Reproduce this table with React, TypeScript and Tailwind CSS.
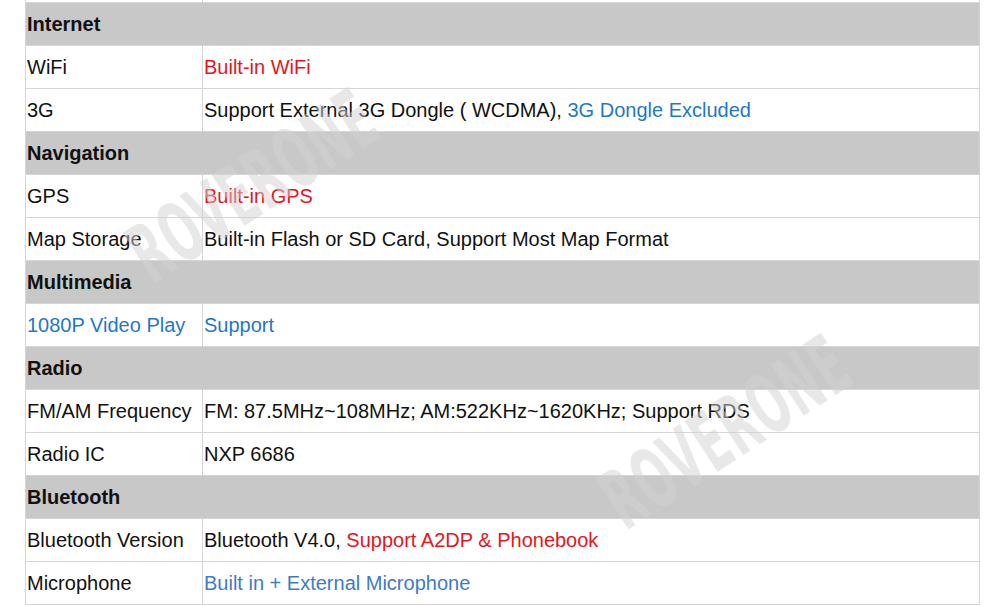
import React from "react";

type Seg = { t: string; c?: "red" | "blue" | "lblue" };
type Row = { header?: string; label?: Seg; value?: Seg[] };

const rows: Row[] = [
  { header: "Internet" },
  { label: { t: "WiFi" }, value: [{ t: "Built-in WiFi", c: "red" }] },
  {
    label: { t: "3G" },
    value: [
      { t: "Support External 3G Dongle ( WCDMA), " },
      { t: "3G Dongle Excluded", c: "blue" },
    ],
  },
  { header: "Navigation" },
  { label: { t: "GPS" }, value: [{ t: "Built-in GPS", c: "red" }] },
  {
    label: { t: "Map Storage" },
    value: [{ t: "Built-in Flash or SD Card, Support Most Map Format" }],
  },
  { header: "Multimedia" },
  {
    label: { t: "1080P Video Play", c: "blue" },
    value: [{ t: "Support", c: "blue" }],
  },
  { header: "Radio" },
  {
    label: { t: "FM/AM Frequency" },
    value: [{ t: "FM: 87.5MHz~108MHz; AM:522KHz~1620KHz; Support RDS" }],
  },
  { label: { t: "Radio IC" }, value: [{ t: "NXP 6686" }] },
  { header: "Bluetooth" },
  {
    label: { t: "Bluetooth Version" },
    value: [
      { t: "Bluetooth V4.0, " },
      { t: "Support A2DP & Phonebook", c: "red" },
    ],
  },
  {
    label: { t: "Microphone" },
    value: [{ t: "Built in + External Microphone", c: "lblue" }],
  },
];

function cls(c?: Seg["c"]) {
  if (c === "red") return "text-[#e8141b]";
  if (c === "blue") return "text-[#1f78c8]";
  if (c === "lblue") return "text-[#3d7cc4]";
  return "text-[#111111]";
}

const wmStyle: React.CSSProperties = {
  transform: "rotate(-33deg) scaleX(0.6) scaleY(1.15)",
  transformOrigin: "center",
  fontFamily: '"DejaVu Sans", sans-serif',
};

export default function App() {
  return (
    <div
      className="relative w-[1000px] h-[606px] bg-white overflow-hidden"
      style={{ fontFamily: '"Liberation Sans", Arial, sans-serif' }}
    >
      <div className="ml-[25px] w-[955px] border-l border-r border-[#d6d6d6]">
        <div className="flex h-[3px] border-b border-[#d6d6d6]">
          <div className="w-[177px] border-r border-[#d6d6d6]" />
          <div className="flex-1" />
        </div>
        {rows.map((r, i) =>
          r.header ? (
            <div
              key={i}
              className="h-[43px] bg-[#c8c8c8] border-b border-[#d6d6d6] flex items-center pl-[1px] text-[20px] font-bold text-[#111111]"
            >
              {r.header}
            </div>
          ) : (
            <div key={i} className="flex h-[43px] border-b border-[#d6d6d6] text-[20px]">
              <div className={`w-[177px] border-r border-[#d6d6d6] flex items-center pl-[1px] ${cls(r.label?.c)}`}>
                {r.label?.t}
              </div>
              <div className="flex-1 flex items-center pl-[1px] whitespace-pre">
                {r.value?.map((s, j) => (
                  <span key={j} className={cls(s.c)}>
                    {s.t}
                  </span>
                ))}
              </div>
            </div>
          )
        )}
      </div>
      <div
        className="absolute left-[22px] top-[132px] text-[72px] font-black tracking-[2px] text-[#d2d2d2] opacity-50 pointer-events-none"
        style={wmStyle}
      >
        ROVERONE
      </div>
      <div
        className="absolute left-[495px] top-[378px] text-[72px] font-black tracking-[2px] text-[#d2d2d2] opacity-50 pointer-events-none"
        style={wmStyle}
      >
        ROVERONE
      </div>
    </div>
  );
}
